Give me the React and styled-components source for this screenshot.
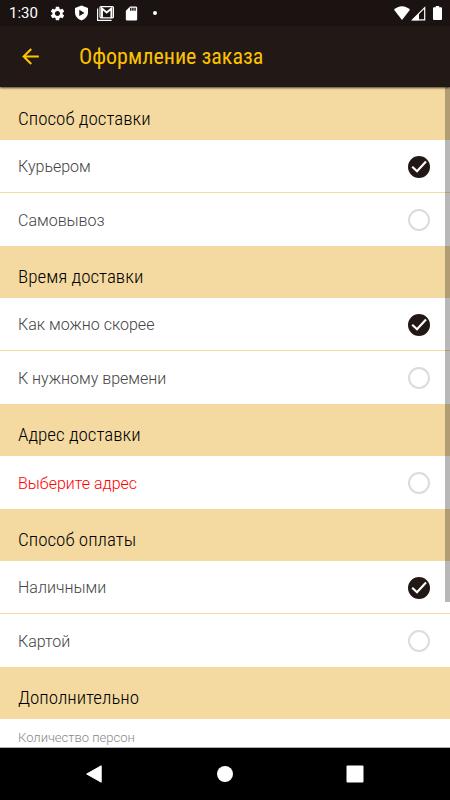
import { useState } from 'react';
import styled, { createGlobalStyle } from 'styled-components';
import { MdArrowBack, MdSdCard, MdSettings } from 'react-icons/md';

const GlobalStyle = createGlobalStyle`
    * {
        box-sizing: border-box;
    }
    body {
        margin: 0;
        background: #fff;
        font-family: Roboto, "Noto Sans", sans-serif;
    }
`

const Screen = styled.div`
    display: flex;
    flex-direction: column;
    height: 100vh;
    overflow: hidden;
`

const StatusBar = styled.div`
    display: flex;
    align-items: center;
    justify-content: space-between;
    flex-shrink: 0;
    height: 26px;
    padding: 0 8px 0 9px;
    background: #1a1311;
    color: #fff;
`

const StatusGroup = styled.div`
    display: flex;
    align-items: center;
    gap: ${props => props.$gap}px;
`

const Clock = styled.span`
    font-size: 15px;
    line-height: 28px;
    margin-right: 2px;
`

const Dot = styled.span`
    width: 4px;
    height: 4px;
    margin-left: 4px;
    border-radius: 50%;
    background: #fff;
`

const AppBar = styled.header`
    display: flex;
    align-items: center;
    flex-shrink: 0;
    gap: 36px;
    height: 61px;
    padding: 0 18px;
    background: #221815;
    color: #fdc300;
    box-shadow: 0 1px 2px rgba(0, 0, 0, 0.7);
    z-index: 1;
`

const BackButton = styled.button`
    display: flex;
    padding: 0;
    border: 0;
    background: none;
    color: inherit;
    cursor: pointer;
`

const Title = styled.h1`
    margin: 0;
    font-family: "Roboto Condensed", Roboto, sans-serif;
    font-size: 22px;
    font-weight: 400;
    line-height: 28px;
`

const Content = styled.main`
    position: relative;
    flex: 1;
    min-height: 0;
    overflow: hidden;
    padding-top: 1px;
    background: #f4daa1;
    border-bottom: 1px solid #b0b0b0;
`

const ScrollThumb = styled.div`
    position: absolute;
    top: 0;
    right: 0;
    width: 5px;
    height: 78%;
    background: rgba(0, 0, 0, 0.28);
`

const Section = styled.fieldset`
    min-width: 0;
    margin: 0;
    padding: 0;
    border: 0;
`

const SectionTitle = styled.legend`
    display: block;
    width: 100%;
    height: 52px;
    padding: 18px 18px 8px;
    background: #f4daa1;
    color: #000;
    font-family: "Roboto Condensed", Roboto, sans-serif;
    font-size: 19px;
    font-weight: 350;
    line-height: 26px;
`

const Row = styled.label`
    display: flex;
    align-items: center;
    justify-content: space-between;
    height: 53px;
    padding: 1px 20px 0 18px;
    border-bottom: 1px solid #f4daa1;
    background: #fff;
    color: ${props => props.$error ? "#f00" : "#444"};
    font-size: 16px;
    font-weight: 300;
    cursor: pointer;
    &:last-child {
        border-bottom: 0;
    }
`

const Radio = styled.input`
    appearance: none;
    width: 22px;
    height: 22px;
    margin: 0;
    border: 2px solid #dcdcdc;
    border-radius: 50%;
    &:checked {
        border-color: #221815;
        background: #221815;
    }
`

const Mark = styled.span`
    display: grid;
    > * {
        grid-area: 1 / 1;
    }
    svg {
        pointer-events: none;
    }
`

const Field = styled.label`
    display: flex;
    flex-direction: column;
    padding: 10px 18px;
    background: #fff;
    color: #888;
    font-size: 13px;
    font-weight: 350;
    line-height: 18px;
`

const Input = styled.input`
    height: 32px;
    padding: 0;
    border: 0;
    border-bottom: 1px solid #ddd;
    font: inherit;
`

const NavBar = styled.nav`
    display: flex;
    align-items: center;
    justify-content: center;
    flex-shrink: 0;
    gap: 112px;
    height: 52px;
    background: #000;
`

const NavButton = styled.button`
    display: flex;
    padding: 0;
    border: 0;
    background: none;
    cursor: pointer;
`

const sections = [
    { id: "delivery", title: "Способ доставки", options: ["Курьером", "Самовывоз"], selected: "Курьером" },
    { id: "time", title: "Время доставки", options: ["Как можно скорее", "К нужному времени"], selected: "Как можно скорее" },
    { id: "address", title: "Адрес доставки", options: ["Выберите адрес"], selected: "", error: true },
    { id: "payment", title: "Способ оплаты", options: ["Наличными", "Картой"], selected: "Наличными" },
]

const ShieldIcon = () => (
    <svg width="13" height="16" viewBox="0 0 13 16">
        <path fill="#fff" fillRule="evenodd" d="M6.5 0.5 13 3v4.6c0 3.6-2.7 6.6-6.5 7.9C2.700 14.200 0 11.200 0 7.600V3zM4.300 4.800v6.200L9.500 7.900z" />
    </svg>
)

const MailIcon = () => (
    <svg width="17" height="15" viewBox="0 0 17 15">
        <path fill="none" stroke="#fff" strokeWidth="1.200" d="M.6 2.500v11.800h14" />
        <rect x="3" y=".6" width="13.400" height="11.200" rx="1" fill="none" stroke="#fff" strokeWidth="1.200" />
        <path fill="none" stroke="#fff" strokeWidth="1.900" d="M5 12V2.500l4.700 4L14.400 2.500V12" />
    </svg>
)

const WifiIcon = () => (
    <svg width="16" height="14" viewBox="0 0 16 14">
        <path fill="#fff" d="M8 14 0 3.700C2.200 1.500 5 .3 8 .3s5.800 1.200 8 3.400z" />
    </svg>
)

const SignalIcon = () => (
    <svg width="15" height="15" viewBox="0 0 15 15">
        <path fill="none" stroke="#fff" strokeWidth="1.200" d="M1.500 13.900 13.700 1.700v12.200z" />
        <path fill="#fff" d="M1 14.300 8 7.300v7z" />
    </svg>
)

const BatteryIcon = () => (
    <svg width="9" height="14" viewBox="0 0 9 14">
        <path fill="#fff" d="M2.800 0h3.400v1.300H8q1 0 1 1V13q0 1-1 1H1q-1 0-1-1V2.300q0-1 1-1h1.800z" />
    </svg>
)

const CheckIcon = () => (
    <svg width="22" height="22" viewBox="0 0 22 22">
        <path fill="none" stroke="#fff" strokeWidth="2.200" d="m4.200 10.800 4.800 4.400 9-9.600" />
    </svg>
)

const OptionSection = ({ section }) => {
    const [value, setValue] = useState(section.selected)

    return (
        <Section>
            <SectionTitle>{section.title}</SectionTitle>
            {section.options.map(option => (
                <Row key={option} $error={section.error}>
                    {option}
                    <Mark>
                        <Radio
                            type="radio"
                            name={section.id}
                            checked={value === option}
                            onChange={() => setValue(option)}
                        />
                        {value === option && <CheckIcon />}
                    </Mark>
                </Row>
            ))}
        </Section>
    )
}

const App = () => {
    return (
        <Screen>
            <GlobalStyle />
            <StatusBar>
                <StatusGroup $gap={9}>
                    <Clock>1:30</Clock>
                    <MdSettings size={17} />
                    <ShieldIcon />
                    <MailIcon />
                    <MdSdCard size={17} />
                    <Dot />
                </StatusGroup>
                <StatusGroup $gap={1}>
                    <WifiIcon />
                    <StatusGroup $gap={7}>
                        <SignalIcon />
                        <BatteryIcon />
                    </StatusGroup>
                </StatusGroup>
            </StatusBar>
            <AppBar>
                <BackButton type="button" aria-label="Назад">
                    <MdArrowBack size={25} />
                </BackButton>
                <Title>Оформление заказа</Title>
            </AppBar>
            <Content>
                {sections.map(section => (
                    <OptionSection key={section.id} section={section} />
                ))}
                <Section>
                    <SectionTitle>Дополнительно</SectionTitle>
                    <Field>
                        Количество персон
                        <Input type="text" inputMode="numeric" />
                    </Field>
                </Section>
                <ScrollThumb />
            </Content>
            <NavBar>
                <NavButton type="button" aria-label="Назад">
                    <svg width="18" height="18" viewBox="0 0 18 18">
                        <path fill="#fff" stroke="#fff" strokeLinejoin="round" d="M.7 9 15.200 .8v16.400z" />
                    </svg>
                </NavButton>
                <NavButton type="button" aria-label="Домой">
                    <svg width="18" height="18" viewBox="0 0 18 18">
                        <circle cx="9" cy="9" r="8" fill="#fff" />
                    </svg>
                </NavButton>
                <NavButton type="button" aria-label="Недавние">
                    <svg width="18" height="18" viewBox="0 0 18 18">
                        <rect x=".5" y=".5" width="17" height="17" rx="1" fill="#fff" />
                    </svg>
                </NavButton>
            </NavBar>
        </Screen>
    )
}

export default App
